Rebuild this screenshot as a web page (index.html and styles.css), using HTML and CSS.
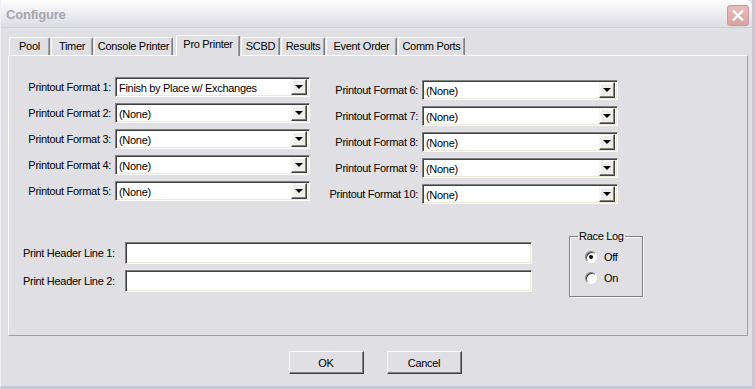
FILE: index.html
```html
<!DOCTYPE html>
<html>
<head>
<meta charset="utf-8">
<link rel="stylesheet" href="styles.css">
</head>
<body>
<div class="window">
  <div class="titlebar">
    <span class="title">Configure</span>
    <span class="close"><svg width="14" height="13" viewBox="0 0 14 13"><path d="M2 1.5 L12 11.5 M12 1.5 L2 11.5" stroke="#fff" stroke-width="2.2" fill="none"/></svg></span>
  </div>
  <div class="tabs">
    <div class="tab t-pool">Pool</div>
    <div class="tab t-timer">Timer</div>
    <div class="tab t-console">Console Printer</div>
    <div class="tab t-pro active">Pro Printer</div>
    <div class="tab t-scbd">SCBD</div>
    <div class="tab t-results">Results</div>
    <div class="tab t-event">Event Order</div>
    <div class="tab t-comm">Comm Ports</div>
  </div>
  <div class="panel">
    <div class="formats">
      <div class="fgrid left">
        <label>Printout Format 1:</label><div class="combo"><span>Finish by Place w/ Exchanges</span><i class="drop"></i></div>
        <label>Printout Format 2:</label><div class="combo"><span>(None)</span><i class="drop"></i></div>
        <label>Printout Format 3:</label><div class="combo"><span>(None)</span><i class="drop"></i></div>
        <label>Printout Format 4:</label><div class="combo"><span>(None)</span><i class="drop"></i></div>
        <label>Printout Format 5:</label><div class="combo"><span>(None)</span><i class="drop"></i></div>
      </div>
      <div class="fgrid right">
        <label>Printout Format 6:</label><div class="combo"><span>(None)</span><i class="drop"></i></div>
        <label>Printout Format 7:</label><div class="combo"><span>(None)</span><i class="drop"></i></div>
        <label>Printout Format 8:</label><div class="combo"><span>(None)</span><i class="drop"></i></div>
        <label>Printout Format 9:</label><div class="combo"><span>(None)</span><i class="drop"></i></div>
        <label>Printout Format 10:</label><div class="combo"><span>(None)</span><i class="drop"></i></div>
      </div>
    </div>
    <div class="headers">
      <div class="hgrid">
        <label>Print Header Line 1:</label><div class="edit"></div>
        <label>Print Header Line 2:</label><div class="edit"></div>
      </div>
      <fieldset class="group">
        <legend>Race Log</legend>
        <div class="radio"><i class="dot on"></i><span>Off</span></div>
        <div class="radio"><i class="dot"></i><span>On</span></div>
      </fieldset>
    </div>
  </div>
  <div class="buttons">
    <div class="btn">OK</div>
    <div class="btn">Cancel</div>
  </div>
</div>
</body>
</html>
```
FILE: styles.css
```css
* { box-sizing: border-box; }
html, body { margin: 0; padding: 0; }
body {
  font-family: "Liberation Sans", Arial, sans-serif;
  font-size: 11px;
  letter-spacing: -0.3px;
  color: #000;
  background: #e0dfe3;
}
.window {
  width: 755px;
  height: 389px;
  background: #e0dfe3;
  border-left: 1px solid #f0f0f4;
  border-right: 3px solid #c8c8d0;
  border-bottom: 3px solid #c8c8d0;
  position: relative;
}
.titlebar {
  height: 28px;
  display: flex;
  align-items: center;
  justify-content: space-between;
  padding: 0 3px 0 5px;
  background: linear-gradient(#fdfdfe 0%, #eeeef3 45%, #dcdce4 100%);
  border-bottom: 1px solid #d0d0d8;
  border-top-right-radius: 6px;
}
.title {
  font-weight: bold;
  font-size: 13px;
  letter-spacing: -0.2px;
  color: #a7a6ae;
  margin-top: 2px;
}
.close {
  width: 22px;
  height: 21px;
  margin-top: 3px;
  border-radius: 3px;
  border: 1px solid #c99a9a;
  background: linear-gradient(#e8bdbd, #d9a2a2);
  display: flex;
  align-items: center;
  justify-content: center;
}
.tabs {
  display: flex;
  align-items: flex-end;
  padding-left: 8px;
  margin-top: 7px;
  height: 20px;
}
.tab {
  height: 18px;
  padding-top: 2px;
  text-align: center;
  border-left: 1px solid #fff;
  border-top: 1px solid #fff;
  border-right: 1px solid #808080;
  box-shadow: inset -1px 0 #a0a0a0;
  border-top-left-radius: 2px;
  border-top-right-radius: 2px;
  white-space: nowrap;
  background: #e0dfe3;
  margin-right: 1px;
}
.t-pool { width: 41px; }
.t-timer { width: 42px; }
.t-console { width: 79px; }
.t-pro { width: 64px; }
.t-scbd { width: 39px; }
.t-results { width: 44px; }
.t-event { width: 71px; }
.t-comm { width: 67px; }
.tab.active {
  height: 21px;
  padding-top: 2px;
  margin-left: 2px;
  position: relative;
  z-index: 2;
  margin-bottom: -1px;
}
.panel {
  margin: 0 4px 0 7px;
  height: 281px;
  border-top: 1px solid #fff;
  border-left: 1px solid #fff;
  border-right: 1px solid #a0a0a0;
  border-bottom: 1px solid #a0a0a0;
  padding: 21px 0 0 6px;
}
.formats {
  display: flex;
  gap: 12px;
}
.fgrid {
  display: grid;
  grid-template-columns: 96px 195px;
  grid-auto-rows: 20px;
  column-gap: 4px;
  row-gap: 6px;
  align-items: center;
}
.fgrid.right {
  margin-top: 3px;
  grid-template-columns: 96px 196px;
}
label {
  text-align: right;
  white-space: nowrap;
}
.combo, .edit {
  background: #fff;
  border-top: 1px solid #808080;
  border-left: 1px solid #808080;
  border-right: 1px solid #fff;
  border-bottom: 1px solid #fff;
  box-shadow: inset 1px 1px #404040, inset -1px -1px #ece9d8;
}
.combo {
  height: 20px;
  display: flex;
  align-items: center;
  justify-content: space-between;
  padding: 0 2px 0 3px;
}
.combo span { padding-top: 1px; }
.drop {
  width: 16px;
  height: 16px;
  background: #efeee9;
  border-top: 1px solid #f4f4f0;
  border-left: 1px solid #f4f4f0;
  border-right: 1px solid #404040;
  border-bottom: 1px solid #404040;
  box-shadow: inset -1px -1px #808080, inset 1px 1px #fff;
  position: relative;
}
.drop::after {
  content: "";
  position: absolute;
  left: 3px;
  top: 5px;
  border-left: 4px solid transparent;
  border-right: 4px solid transparent;
  border-top: 4px solid #000;
}
.headers {
  display: flex;
  align-items: flex-start;
  margin-top: 26px;
  padding-left: 8px;
}
.hgrid {
  display: grid;
  grid-template-columns: 94px 407px;
  grid-template-rows: 22px 22px;
  column-gap: 8px;
  row-gap: 6px;
  align-items: center;
  margin-top: 12px;
}
.hgrid label { text-align: left; }
.edit { height: 22px; }
.group {
  margin: 0 0 0 37px;
  width: 74px;
  height: 67px;
  padding: 4px 0 0 15px;
  border: 1px solid #808080;
  box-shadow: 1px 1px #fff, inset 1px 1px #fff;
  min-width: 0;
}
.group legend {
  padding: 0 1px;
  margin-left: -7px;
}
.radio {
  display: flex;
  align-items: center;
  gap: 7px;
  height: 21px;
}
.dot {
  width: 12px;
  height: 12px;
  border-radius: 50%;
  background: #fff;
  border: 1px solid;
  border-color: #808080 #fff #fff #808080;
  box-shadow: inset 1px 1px #404040;
  position: relative;
}
.dot.on::after {
  content: "";
  position: absolute;
  left: 3px;
  top: 3px;
  width: 4px;
  height: 4px;
  border-radius: 50%;
  background: #000;
}
.buttons {
  display: flex;
  justify-content: center;
  gap: 23px;
  margin-top: 15px;
  padding-right: 3px;
}
.btn {
  width: 75px;
  height: 23px;
  display: flex;
  align-items: center;
  justify-content: center;
  background: #e0dfe3;
  border-top: 1px solid #fff;
  border-left: 1px solid #fff;
  border-right: 1px solid #404040;
  border-bottom: 1px solid #404040;
  box-shadow: inset -1px -1px #808080;
}
```
